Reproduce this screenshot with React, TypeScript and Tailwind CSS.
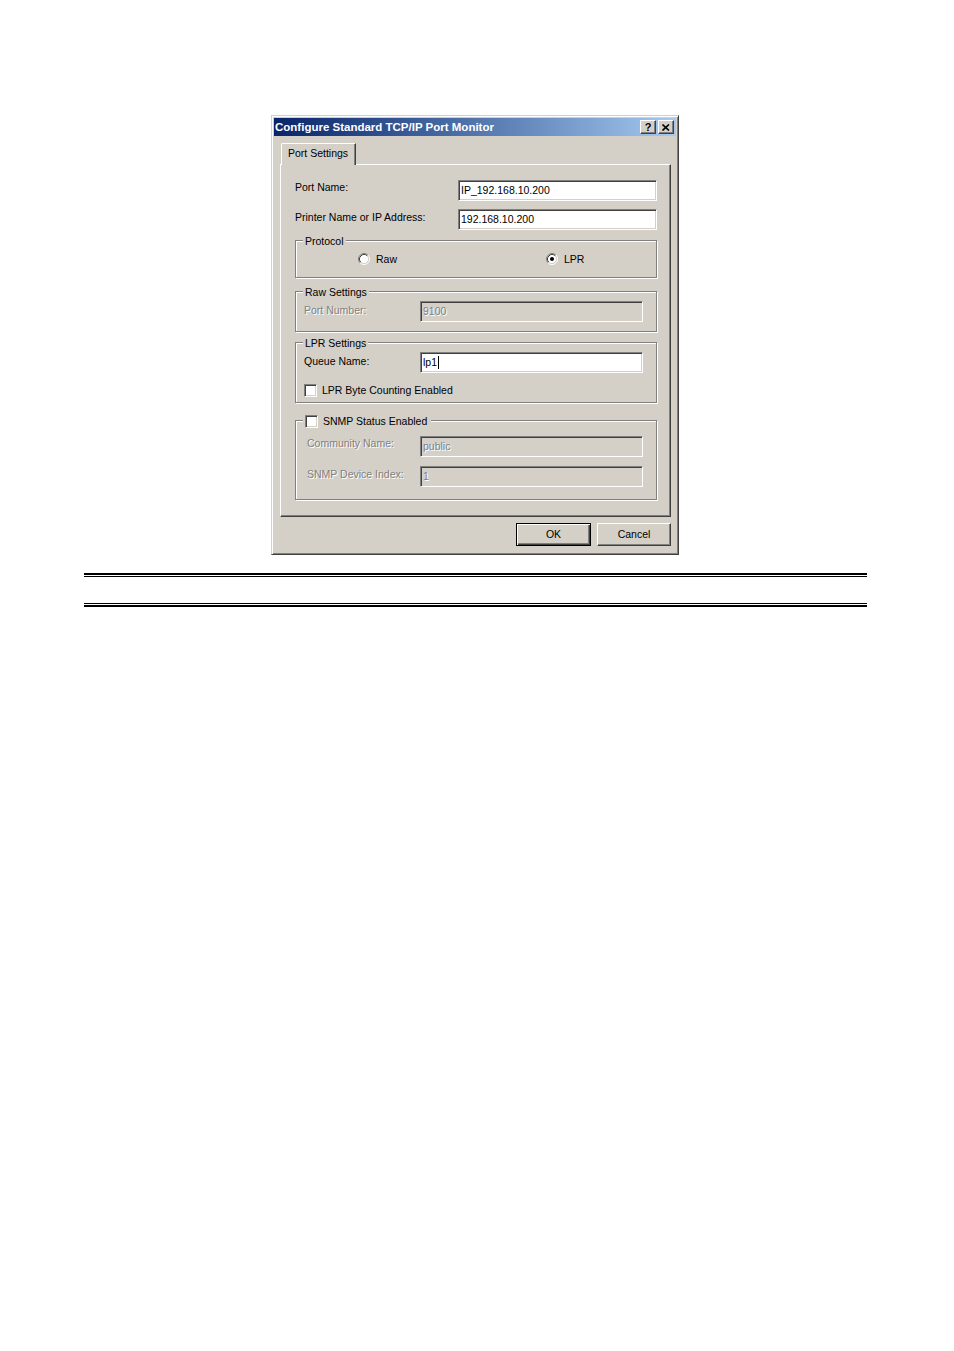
import React from 'react';

const font = { fontFamily: '"Liberation Sans", Arial, sans-serif' };

function Sunken({ value, disabled, caret, w = 'w-[223px]' }: { value: string; disabled?: boolean; caret?: boolean; w?: string }) {
  return (
    <div
      className={`${w} h-[21px] flex items-center pl-[2px] border border-t-[#808080] border-l-[#808080] border-b-white border-r-white shadow-[inset_1px_1px_0_#404040,inset_-1px_-1px_0_#d4d0c8] ${
        disabled ? 'bg-[#d4d0c8] text-[#808080] [text-shadow:1px_1px_0_#fff]' : 'bg-white text-black'
      }`}
    >
      <span className="leading-[13px]">{value}</span>
      {caret && <span className="ml-px w-px h-[13px] bg-black" />}
    </div>
  );
}

function Check() {
  return (
    <div className="w-[13px] h-[13px] shrink-0 bg-white border border-t-[#808080] border-l-[#808080] border-b-white border-r-white shadow-[inset_1px_1px_0_#404040,inset_-1px_-1px_0_#d4d0c8]" />
  );
}

function Radio({ checked }: { checked?: boolean }) {
  return (
    <svg width="12" height="12" viewBox="0 0 12 12" className="shrink-0">
      <circle cx="6" cy="6" r="4.5" fill="#fff" />
      <path d="M2.11 9.89 A5.5 5.5 0 0 1 9.89 2.11" fill="none" stroke="#808080" />
      <path d="M9.89 2.11 A5.5 5.5 0 0 1 2.11 9.89" fill="none" stroke="#fff" />
      <path d="M2.82 9.18 A4.5 4.5 0 0 1 9.18 2.82" fill="none" stroke="#404040" />
      <path d="M9.18 2.82 A4.5 4.5 0 0 1 2.82 9.18" fill="none" stroke="#d4d0c8" />
      {checked && <circle cx="6" cy="6" r="2" fill="#000" />}
    </svg>
  );
}

function Group({ legend, h, mt, children }: { legend: React.ReactNode; h: string; mt: string; children?: React.ReactNode }) {
  return (
    <div className={`relative ${h} ${mt} w-[362px] border border-[#808080] shadow-[inset_1px_1px_0_#fff,1px_1px_0_#fff]`}>
      <div className="absolute left-[7px] -top-[7px] bg-[#d4d0c8] px-[2px] leading-[14px] flex items-center">{legend}</div>
      {children}
    </div>
  );
}

function Field({ label, value, disabled, caret, pl = 'pl-[8px]', lw = 'w-[116px]', pt = 'pt-[2px]', mt }: { label: string; value: string; disabled?: boolean; caret?: boolean; pl?: string; lw?: string; pt?: string; mt: string }) {
  return (
    <div className={`flex items-start ${pl} ${mt}`}>
      <div className={`${lw} ${pt} leading-[14px] ${disabled ? 'text-[#808080] [text-shadow:1px_1px_0_#fff]' : ''}`}>{label}</div>
      <Sunken value={value} disabled={disabled} caret={caret} />
    </div>
  );
}

const raised = 'border border-t-white border-l-white border-r-[#404040] border-b-[#404040] shadow-[inset_-1px_-1px_0_#808080]';

export default function App() {
  return (
    <div className="w-[954px] h-[1351px] bg-white overflow-hidden text-[10.5px] text-black" style={font}>
      <div className="ml-[271px] mt-[115px] w-[408px] h-[440px] bg-[#d4d0c8] border border-t-[#d4d0c8] border-l-[#d4d0c8] border-r-[#404040] border-b-[#404040] shadow-[inset_1px_1px_0_#fff,inset_-1px_-1px_0_#808080] p-[2px]">
        {/* title bar */}
        <div className="h-[18px] flex items-center bg-gradient-to-r from-[#0a246a] to-[#a6caf0] pl-[1px] pr-[2px]">
          <span className="text-white font-bold text-[11.5px] leading-[14px] flex-1">Configure Standard TCP/IP Port Monitor</span>
          <div className={`w-[16px] h-[14px] bg-[#d4d0c8] ${raised} flex items-center justify-center text-[11px] font-bold leading-none`}>?</div>
          <div className={`ml-[2px] w-[16px] h-[14px] bg-[#d4d0c8] ${raised} flex items-center justify-center`}>
            <svg width="8" height="7" viewBox="0 0 8 7">
              <path d="M0.5 0.5 L7 6.5 M7 0.5 L0.5 6.5" stroke="#000" strokeWidth="1.6" fill="none" />
            </svg>
          </div>
        </div>

        <div className="pl-[6px] pt-[7px]">
          {/* tab */}
          <div className="relative z-10 ml-px w-[75px] h-[22px] -mb-px bg-[#d4d0c8] border-t border-l border-white border-r border-r-[#404040] rounded-tl-[2px] shadow-[inset_-1px_0_0_#808080] flex items-start pl-[6px] pt-[2px]">
            <span className="leading-[14px]">Port Settings</span>
          </div>
          {/* panel */}
          <div className="w-[391px] h-[353px] border border-t-white border-l-white border-r-[#404040] border-b-[#404040] shadow-[inset_-1px_-1px_0_#808080] pl-[14px]">
            <div className="flex items-start mt-[15px]">
              <div className="w-[163px] leading-[14px]">Port Name:</div>
              <Sunken value="IP_192.168.10.200" w="w-[199px]" />
            </div>
            <div className="flex items-start mt-[8px]">
              <div className="w-[163px] pt-px leading-[14px]">Printer Name or IP Address:</div>
              <Sunken value="192.168.10.200" w="w-[199px]" />
            </div>

            <Group legend="Protocol" h="h-[38px]" mt="mt-[10px]">
              <div className="h-full flex items-center">
                <div className="ml-[62px] flex items-center">
                  <Radio />
                  <span className="ml-[6px] leading-[14px]">Raw</span>
                </div>
                <div className="ml-[149px] flex items-center">
                  <Radio checked />
                  <span className="ml-[6px] leading-[14px]">LPR</span>
                </div>
              </div>
            </Group>

            <Group legend="Raw Settings" h="h-[41px]" mt="mt-[13px]">
              <Field label="Port Number:" value="9100" disabled mt="mt-[9px]" />
            </Group>

            <Group legend="LPR Settings" h="h-[61px]" mt="mt-[10px]">
              <Field label="Queue Name:" value="lp1" caret mt="mt-[9px]" />
              <div className="flex items-center pl-[8px] mt-[10px]">
                <Check />
                <span className="ml-[5px] leading-[14px]">LPR Byte Counting Enabled</span>
              </div>
            </Group>

            <Group
              legend={
                <>
                  <Check />
                  <span className="ml-[5px] mr-[2px]">SNMP Status Enabled</span>
                </>
              }
              h="h-[80px]"
              mt="mt-[17px]"
            >
              <Field label="Community Name:" value="public" disabled pl="pl-[11px]" lw="w-[113px]" pt="pt-0" mt="mt-[15px]" />
              <Field label="SNMP Device Index:" value="1" disabled pl="pl-[11px]" lw="w-[113px]" pt="pt-px" mt="mt-[9px]" />
            </Group>
          </div>
          {/* buttons */}
          <div className="w-[391px] flex justify-end gap-[6px] mt-[6px]">
            <div className="w-[75px] h-[23px] pb-[2px] border border-black shadow-[inset_1px_1px_0_#fff,inset_-1px_-1px_0_#404040,inset_-2px_-2px_0_#808080] flex items-center justify-center">
              <span className="leading-[14px]">OK</span>
            </div>
            <div className={`w-[74px] h-[23px] pb-[2px] ${raised} flex items-center justify-center`}>
              <span className="leading-[14px]">Cancel</span>
            </div>
          </div>
        </div>
      </div>

      {/* rules */}
      <div className="ml-[84px] mt-[18px] w-[783px]">
        <div className="h-[2px] bg-black" />
        <div className="h-px bg-black mt-px" />
        <div className="h-px bg-black mt-[26px]" />
        <div className="h-[2px] bg-black mt-px" />
      </div>
    </div>
  );
}
